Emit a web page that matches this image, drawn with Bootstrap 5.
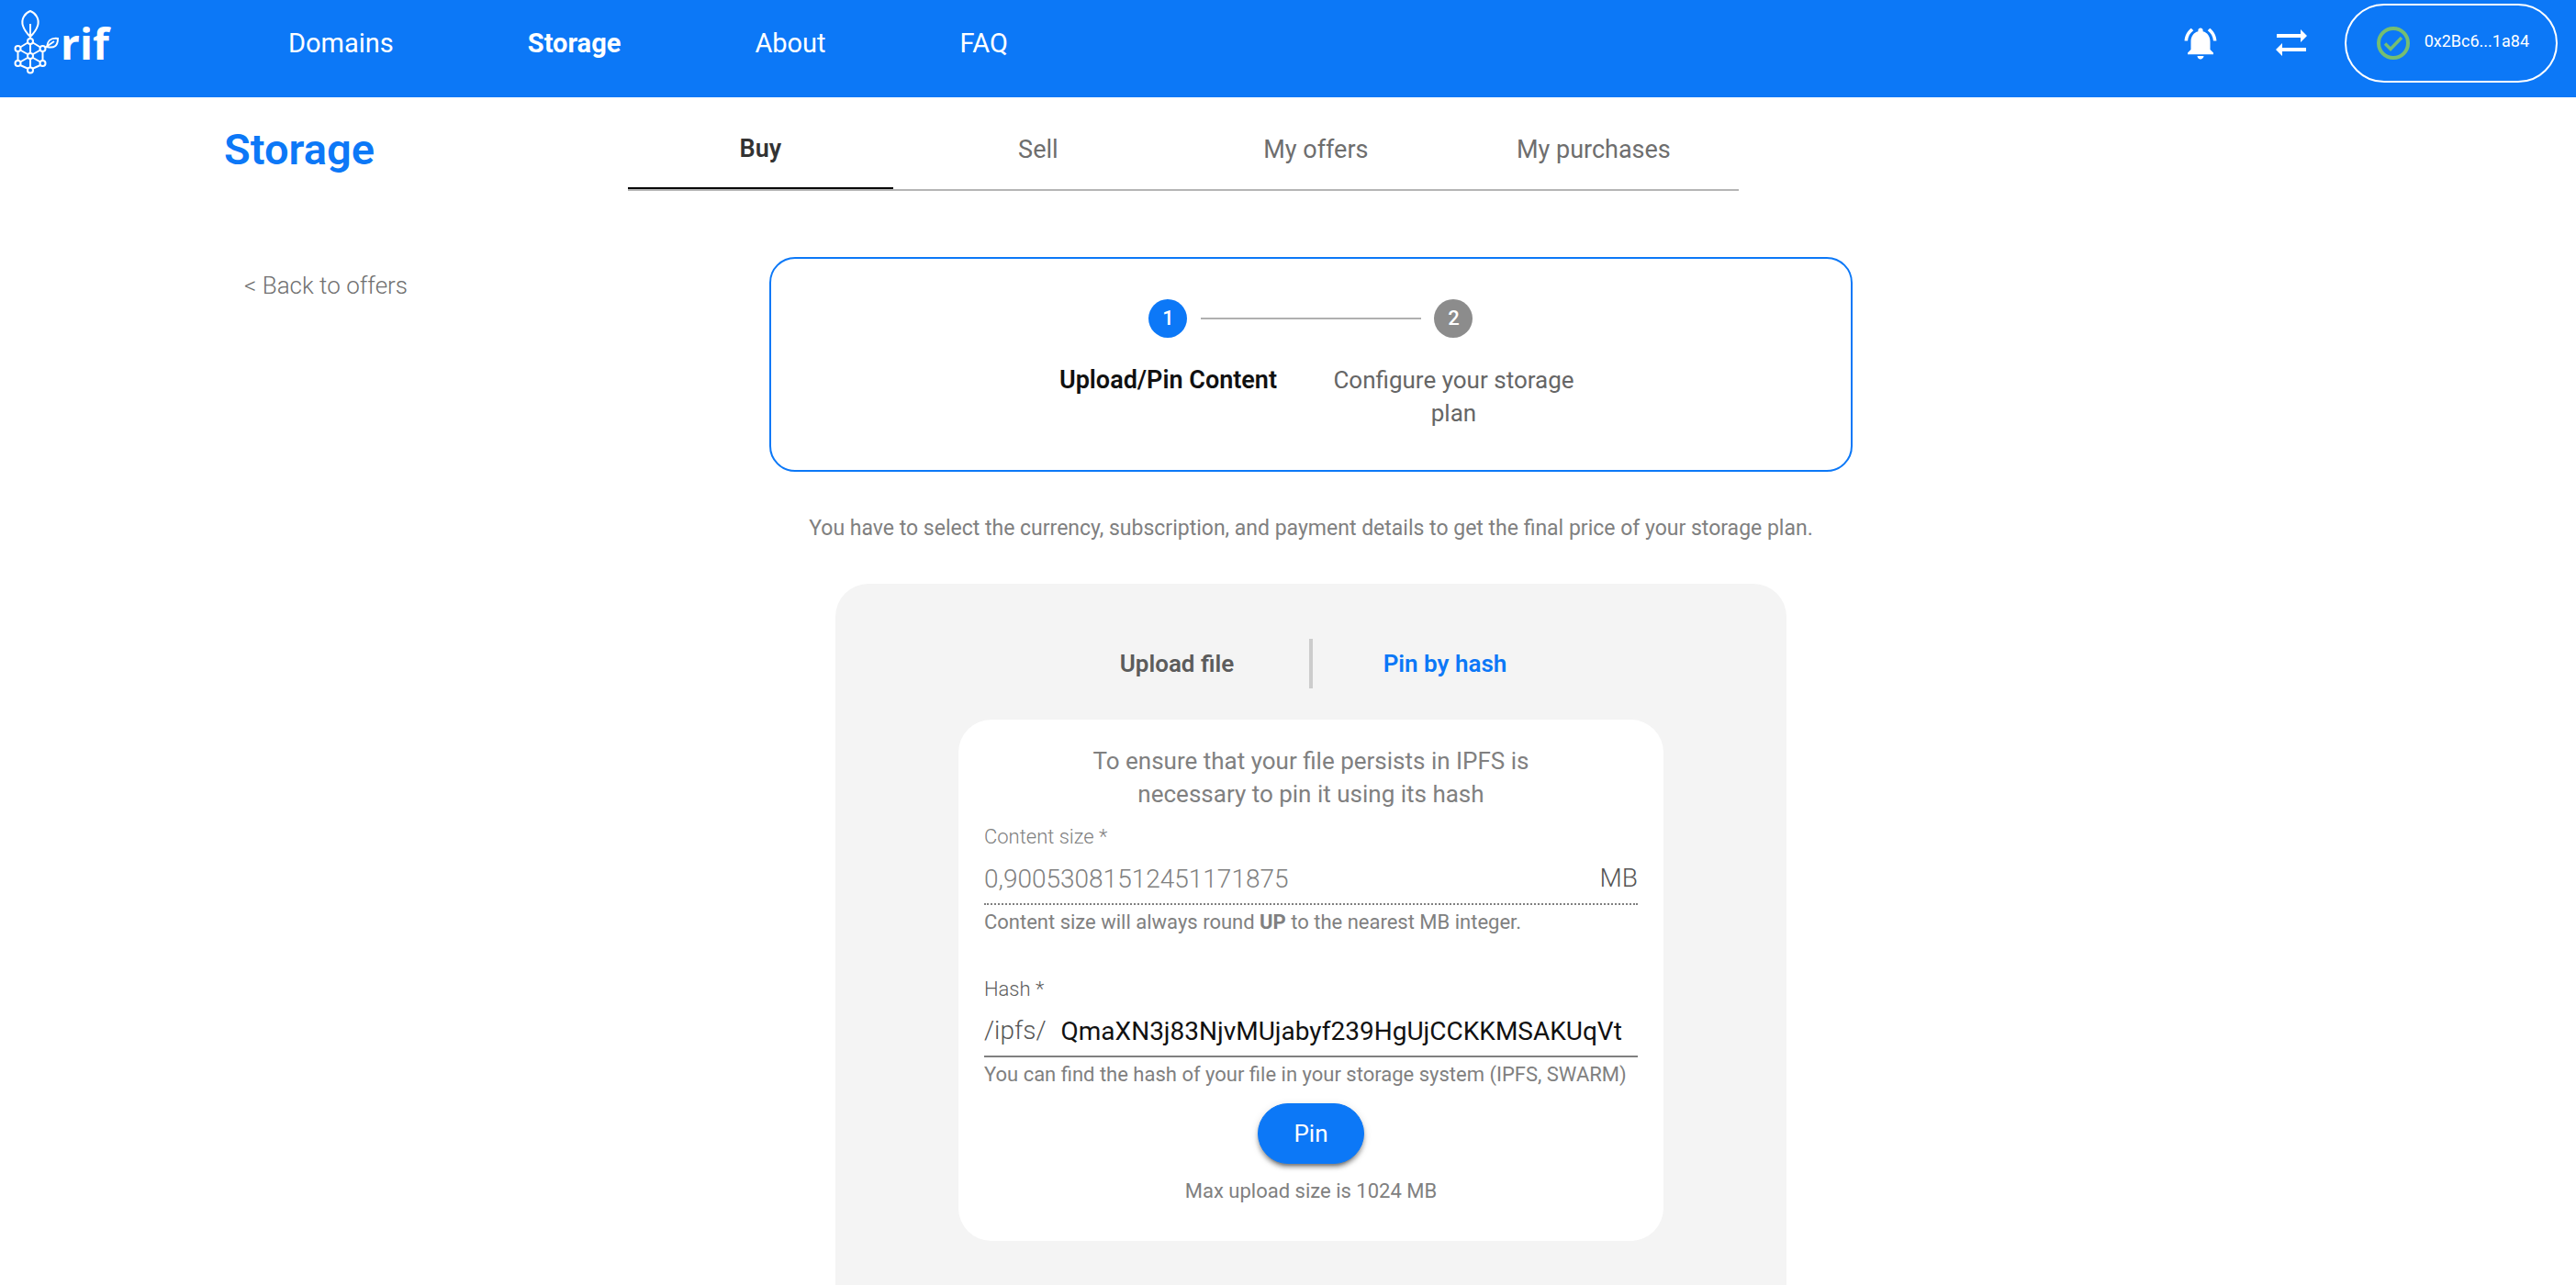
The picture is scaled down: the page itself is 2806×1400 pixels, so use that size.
<!DOCTYPE html>
<html lang="en">
<head>
<meta charset="utf-8">
<meta name="viewport" content="width=device-width, initial-scale=1">
<title>RIF Marketplace - Storage</title>
<link href="https://cdn.jsdelivr.net/npm/bootstrap@5.3.0/dist/css/bootstrap.min.css" rel="stylesheet">
<style>
:root { --rif-blue: #0c78f7; --rif-grey: #808080; --rif-dark: #5c5c5c; }
body { font-family: Roboto, "Liberation Sans", sans-serif; font-size: 26px; line-height: 36px; color: var(--rif-grey); background: #fff; }
a { text-decoration: none; color: inherit; }

.topbar { background: var(--rif-blue); color: #fff; padding: 4px 20px 16px 14px; }
.brand { width: 300px; color: #fff; }
.brand-name { font-family: "Open Sans", "Noto Sans", sans-serif; font-weight: 700; font-size: 46px; line-height: 60px; }
.main-nav { gap: 146px; font-size: 29px; }
.icon-btn { background: none; border: 0; padding: 0; color: #fff; line-height: 0; }
.account { border: 2px solid #fff; border-radius: 43px; height: 86px; width: 232px; padding: 0 29px 4px 32px; background: none; color: #fff; font-size: 18px; line-height: 28px; }
.account svg { margin-top: 4px; }
.tools { gap: 60px; }
.account-wrap { margin-left: -20px; }

.page { padding: 32px 22.6% 0 8.7%; scrollbar-width: none; }
.side { flex: 0 0 440px; }
.page-title { font-size: 47px; line-height: 50px; font-weight: 600; color: var(--rif-blue); }
.section-tabs { flex: 0 1 1210px; border-bottom: 2px solid #b5b5b5; font-size: 27px; }
.section-tab { height: 68px; margin-right: 14px; padding-bottom: 18px; color: #6e6e6e; }
.section-tab.active { border-bottom: 2px solid #000; color: #333; font-weight: 600; }

.content-row { margin-top: 72px; }
.back-link { display: inline-block; margin: 13px 0 0 22px; font-weight: 300; color: #707070; }
.steps-box { width: 100%; max-width: 1180px; border: 2px solid var(--rif-blue); border-radius: 28px; padding: 44px 24px; }
.step { width: 311px; padding: 0 16px; position: relative; text-align: center; color: #666; }
.step-dot { width: 42px; height: 42px; border-radius: 50%; background: #8c8c8c; color: #fff; font-size: 22px; line-height: 42px; margin: 0 auto 28px; font-weight: 500; }
.step.current { color: #111; font-weight: 600; font-size: 27px; }
.step.current .step-dot { background: var(--rif-blue); }
.step + .step::before { content: ""; position: absolute; top: 20px; right: calc(50% + 35px); width: 240px; height: 2px; background: #b0b0b0; }
.text-note { font-size: 23px; line-height: 32px; margin: 46px 0 44px; }

.panel { width: 100%; max-width: 1036px; background: #f4f4f4; border-radius: 36px; padding: 60px 24px 120px; }
.mode-btn { width: 288px; background: none; border: 0; padding: 0; color: var(--rif-dark); font-weight: 600; }
.mode-btn.active { color: var(--rif-blue); }
.mode-split { width: 4px; height: 54px; background: #ccc; }
.pin-card { width: 100%; max-width: 768px; background: #fff; border-radius: 36px; margin-top: 34px; padding: 27px 28px 40px; }
.intro { max-width: 520px; margin-bottom: 15px; }
.field-label { display: block; font-size: 22px; line-height: 28px; color: #5c5c5c; font-weight: 300; margin-bottom: 4px; }
.field-label.muted { color: #808080; }
.field-line { border-bottom: 2px solid #808080; height: 56px; font-size: 28px; font-weight: 300; color: #555; }
.field-line.dotted { border-bottom-style: dotted; }
.field-line input { border: 0; padding: 0; margin: 0; background: none; outline: 0; min-width: 0; color: #111; height: 54px; font-weight: 400; }
.field-line input:disabled { color: #808080; font-weight: 300; }
.prefix { margin-right: 16px; }
.helper { font-size: 22px; line-height: 28px; margin-top: 5px; }
.field-gap { margin-top: 45px; }
.btn-pin { --bs-btn-bg: var(--rif-blue); --bs-btn-border-color: var(--rif-blue); --bs-btn-color: #fff; width: 116px; height: 66px; border-radius: 33px; font-size: 26px; line-height: 36px; padding: 0; margin: 17px 0 16px; box-shadow: 0 6px 2px -4px rgba(0,0,0,.2), 0 4px 4px rgba(0,0,0,.3), 0 2px 10px rgba(0,0,0,.12); }
</style>
<script src="https://cdn.jsdelivr.net/npm/bootstrap@5.3.0/dist/js/bootstrap.bundle.min.js"></script>
</head>
<body class="vh-100 d-flex flex-column overflow-hidden">

<header class="topbar d-flex align-items-center flex-shrink-0">
  <a href="#" class="brand d-flex align-items-center flex-shrink-0" aria-label="rif">
    <svg width="52" height="74" viewBox="14 8 52 74" fill="none" stroke="#fff" stroke-width="2" aria-hidden="true">
      <path d="M33 38C26 31 22 23 26 16Q28 12 33 10Q38 12 40 16C44 23 40 31 33 38ZM33 24V40"/>
      <path d="M33 46V56M33 62V71M19.500 54V64M46.500 54V64M31 44L22 49.500M35 44L44 49.500M22 52.500L30 57M44 52.500L36 57M30 61L22 65.500M36 61L44 65.500M22 69L31 73M44 69L35 73"/>
      <path d="M49 50L59 43M51 49C52 42 55 39 63 40C63 48 59 51 51 49Z"/>
      <g stroke-width="2"><circle cx="33" cy="43" r="3"/><circle cx="19.500" cy="51" r="3"/><circle cx="46.500" cy="51" r="3"/><circle cx="33" cy="59" r="3"/><circle cx="19.500" cy="67" r="3"/><circle cx="46.500" cy="67" r="3"/><circle cx="33" cy="74.500" r="3"/></g>
    </svg>
    <span class="brand-name">rif</span>
  </a>
  <nav class="main-nav d-flex">
    <a href="#">Domains</a>
    <a href="#" class="fw-bold" aria-current="page">Storage</a>
    <a href="#">About</a>
    <a href="#">FAQ</a>
  </nav>
  <div class="tools d-flex align-items-center ms-auto">
    <button class="icon-btn" type="button" aria-label="Notifications">
      <svg width="42" height="42" viewBox="0 0 24 24" fill="currentColor"><path d="M7.580 4.080L6.150 2.650C3.750 4.480 2.170 7.300 2.030 10.500h2c.15-2.650 1.510-4.970 3.550-6.420zm12.390 6.420h2c-.15-3.200-1.730-6.020-4.120-7.850l-1.420 1.430c2.020 1.450 3.390 3.770 3.540 6.420zM18 11c0-3.070-1.640-5.640-4.500-6.320V4c0-.83-.67-1.500-1.500-1.500s-1.500.67-1.500 1.500v.68C7.630 5.360 6 7.920 6 11v5l-2 2v1h16v-1l-2-2v-5zm-6 11c.14 0 .27-.01.4-.04.65-.14 1.180-.58 1.440-1.180.1-.24.15-.5.15-.78h-4c.01 1.100.9 2 2.010 2z"/></svg>
    </button>
    <button class="icon-btn" type="button" aria-label="Transactions">
      <svg width="36" height="30" viewBox="0 0 36 30" fill="currentColor"><path d="M2 5H28V0L35 7L28 14V9H2ZM34 20H8V15L1 22L8 29V24H34Z"/></svg>
    </button>
    <div class="account-wrap">
      <button class="account d-flex align-items-center justify-content-between" type="button">
        <svg width="38" height="38" viewBox="0 0 38 38" fill="none" stroke="#75be72" stroke-width="4" aria-hidden="true"><circle cx="19" cy="19" r="16"/><path d="M10 19.500L16 25.500L28 13" stroke-width="3.500"/></svg>
        <span>0x2Bc6...1a84</span>
      </button>
    </div>
  </div>
</header>

<main class="page flex-grow-1 overflow-auto">
  <div class="d-flex">
    <div class="side"><h1 class="page-title m-0">Storage</h1></div>
    <nav class="section-tabs row row-cols-4 g-0">
      <div class="col"><a href="#" class="section-tab active d-flex align-items-center justify-content-center">Buy</a></div>
      <div class="col"><a href="#" class="section-tab d-flex align-items-center justify-content-center">Sell</a></div>
      <div class="col"><a href="#" class="section-tab d-flex align-items-center justify-content-center">My offers</a></div>
      <div class="col"><a href="#" class="section-tab d-flex align-items-center justify-content-center">My purchases</a></div>
    </nav>
  </div>

  <div class="content-row d-flex">
    <div class="side"><a href="#" class="back-link">&lt; Back to offers</a></div>
    <div class="flex-grow-1 d-flex flex-column align-items-center">
      <section class="steps-box d-flex justify-content-center">
        <div class="step current"><div class="step-dot">1</div>Upload/Pin Content</div>
        <div class="step"><div class="step-dot">2</div>Configure your storage plan</div>
      </section>

      <p class="text-note text-center">You have to select the currency, subscription, and payment details to get the final price of your storage plan.</p>

      <section class="panel d-flex flex-column align-items-center">
        <div class="d-flex align-items-center justify-content-center">
          <button type="button" class="mode-btn">Upload file</button>
          <div class="mode-split"></div>
          <button type="button" class="mode-btn active">Pin by hash</button>
        </div>
        <form class="pin-card">
          <p class="intro text-center mx-auto">To ensure that your file persists in IPFS is necessary to pin it using its hash</p>
          <label class="field-label muted" for="size">Content size *</label>
          <div class="field-line dotted d-flex align-items-center">
            <input id="size" class="flex-grow-1" type="text" value="0,90053081512451171875" disabled>
            <span>MB</span>
          </div>
          <div class="helper">Content size will always round <strong>UP</strong> to the nearest MB integer.</div>

          <label class="field-label field-gap" for="hash">Hash *</label>
          <div class="field-line d-flex align-items-center">
            <span class="prefix">/ipfs/</span>
            <input id="hash" class="flex-grow-1" type="text" value="QmaXN3j83NjvMUjabyf239HgUjCCKKMSAKUqVt">
          </div>
          <div class="helper">You can find the hash of your file in your storage system (IPFS, SWARM)</div>
          <div class="d-flex flex-column align-items-center">
            <button type="button" class="btn btn-pin">Pin</button>
            <div class="helper m-0">Max upload size is 1024 MB</div>
          </div>
        </form>
      </section>
    </div>
  </div>
</main>
</body>
</html>
